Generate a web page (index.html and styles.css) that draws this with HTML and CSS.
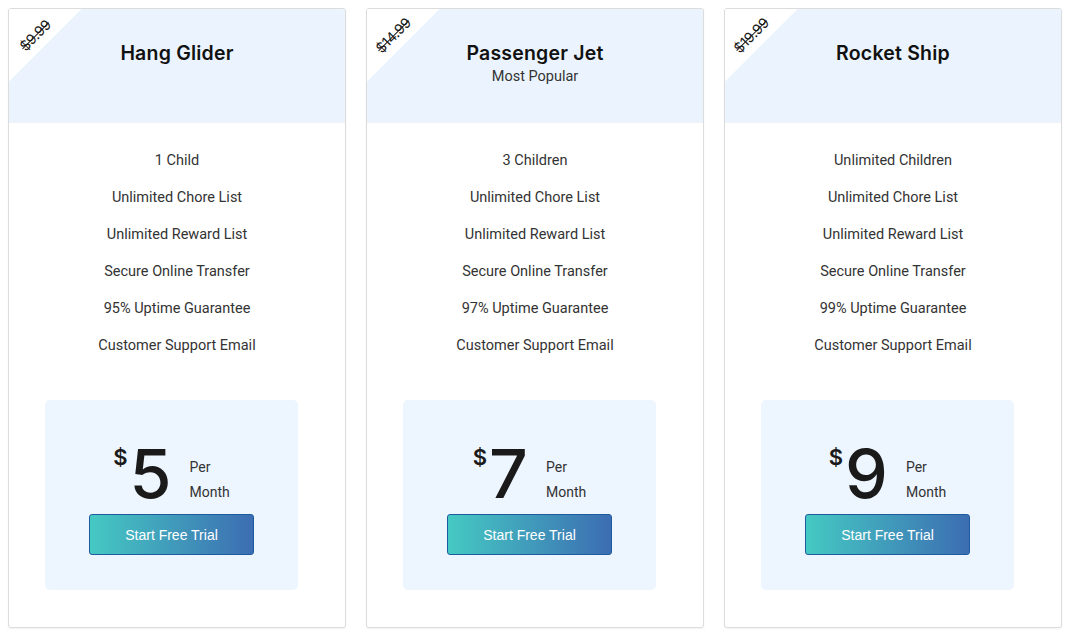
FILE: index.html
```html
<!DOCTYPE html>
<html lang="en">

<head>
    <meta charset="UTF-8" />
    <meta name="viewport" content="width=device-width, initial-scale=1.0" />
    <title>Pricing</title>
    <link rel="stylesheet" href="styles.css">
</head>

<body>
    <div class="pricing">
        <div class="plan">
            <div class="plan-header">
                <div class="ribbon"><s>$9.99</s></div>
                <h2>Hang Glider</h2>
            </div>
            <ul class="features">
                <li>1 Child</li>
                <li>Unlimited Chore List</li>
                <li>Unlimited Reward List</li>
                <li>Secure Online Transfer</li>
                <li>95% Uptime Guarantee</li>
                <li>Customer Support Email</li>
            </ul>
            <div class="price-box">
                <div class="price">
                    <span class="currency">$</span>
                    <span class="amount">5</span>
                    <span class="period">Per<br>Month</span>
                </div>
                <button class="trial-btn">Start Free Trial</button>
            </div>
        </div>

        <div class="plan">
            <div class="plan-header">
                <div class="ribbon"><s>$14.99</s></div>
                <h2>Passenger Jet</h2>
                <p class="tagline">Most Popular</p>
            </div>
            <ul class="features">
                <li>3 Children</li>
                <li>Unlimited Chore List</li>
                <li>Unlimited Reward List</li>
                <li>Secure Online Transfer</li>
                <li>97% Uptime Guarantee</li>
                <li>Customer Support Email</li>
            </ul>
            <div class="price-box">
                <div class="price">
                    <span class="currency">$</span>
                    <span class="amount">7</span>
                    <span class="period">Per<br>Month</span>
                </div>
                <button class="trial-btn">Start Free Trial</button>
            </div>
        </div>

        <div class="plan">
            <div class="plan-header">
                <div class="ribbon"><s>$19.99</s></div>
                <h2>Rocket Ship</h2>
            </div>
            <ul class="features">
                <li>Unlimited Children</li>
                <li>Unlimited Chore List</li>
                <li>Unlimited Reward List</li>
                <li>Secure Online Transfer</li>
                <li>99% Uptime Guarantee</li>
                <li>Customer Support Email</li>
            </ul>
            <div class="price-box">
                <div class="price">
                    <span class="currency">$</span>
                    <span class="amount">9</span>
                    <span class="period">Per<br>Month</span>
                </div>
                <button class="trial-btn">Start Free Trial</button>
            </div>
        </div>
    </div>
</body>

</html>
```

FILE: styles.css
```css
:root {
    --header-bg: #ebf4fe;
    --box-bg: #edf5fe;
    --text-color: #333;
    --title-color: #111;
    --border-color: #dcdcdc;
}

* {
    box-sizing: border-box;
    margin: 0;
    padding: 0;
}

body {
    font-family: Roboto, 'Liberation Sans', sans-serif;
    color: var(--text-color);
    background: white;
}

.pricing {
    display: flex;
    gap: 20px;
    padding: 8px;
}

.plan {
    flex: 1;
    height: 620px;
    border: 1px solid var(--border-color);
    border-radius: 3px;
    box-shadow: 0 1px 2px rgba(0, 0, 0, 0.06);
    overflow: hidden;
    background: white;
}

.plan-header {
    position: relative;
    height: 114px;
    background: var(--header-bg);
    border-bottom: 1px solid #f0f2f5;
    text-align: center;
    padding-top: 32px;
    overflow: hidden;
}

.plan-header h2 {
    font-family: Inter, 'Open Sans', sans-serif;
    font-weight: 600;
    font-size: 19.5px;
    line-height: 24px;
    color: var(--title-color);
    letter-spacing: 0.2px;
}

.tagline {
    font-size: 14.5px;
    line-height: 24px;
    color: #333;
}

/* Corner ribbon with the old price */
.ribbon {
    position: absolute;
    top: -15px;
    left: -65px;
    width: 160px;
    height: 60px;
    background: white;
    transform: rotate(-45deg);
    display: flex;
    align-items: flex-end;
    justify-content: center;
    padding-bottom: 6px;
}

.ribbon s {
    font-family: Inter, sans-serif;
    font-size: 14px;
    line-height: 17px;
    color: #1a1a1a;
    letter-spacing: -0.3px;
}

.features {
    list-style: none;
    text-align: center;
    padding-top: 19px;
}

.features li {
    font-size: 14.5px;
    line-height: 37px;
}

.price-box {
    width: 253px;
    height: 190px;
    margin: 36px 0 0 36px;
    background: var(--box-bg);
    border-radius: 5px;
    display: flex;
    flex-direction: column;
    align-items: center;
    padding-top: 38px;
}

.price {
    display: flex;
    align-items: flex-start;
    color: #1a1a1a;
}

.currency {
    font-family: Inter, sans-serif;
    font-weight: 600;
    font-size: 22px;
    line-height: 22px;
    margin-top: 8px;
    margin-right: 2px;
}

.amount {
    font-family: Inter, sans-serif;
    font-weight: 500;
    font-size: 68px;
    line-height: 70px;
    letter-spacing: -1px;
}

.period {
    font-size: 14px;
    line-height: 25px;
    margin: 17px 0 0 19px;
    color: #333;
}

.trial-btn {
    margin-top: 6px;
    width: 165px;
    height: 41px;
    border: 1px solid #1d5a9e;
    border-radius: 3px;
    background: linear-gradient(to right, #45c9c3, #3c6db2);
    color: white;
    font-family: 'Liberation Sans', Arial, sans-serif;
    font-size: 14px;
    cursor: pointer;
}
```
